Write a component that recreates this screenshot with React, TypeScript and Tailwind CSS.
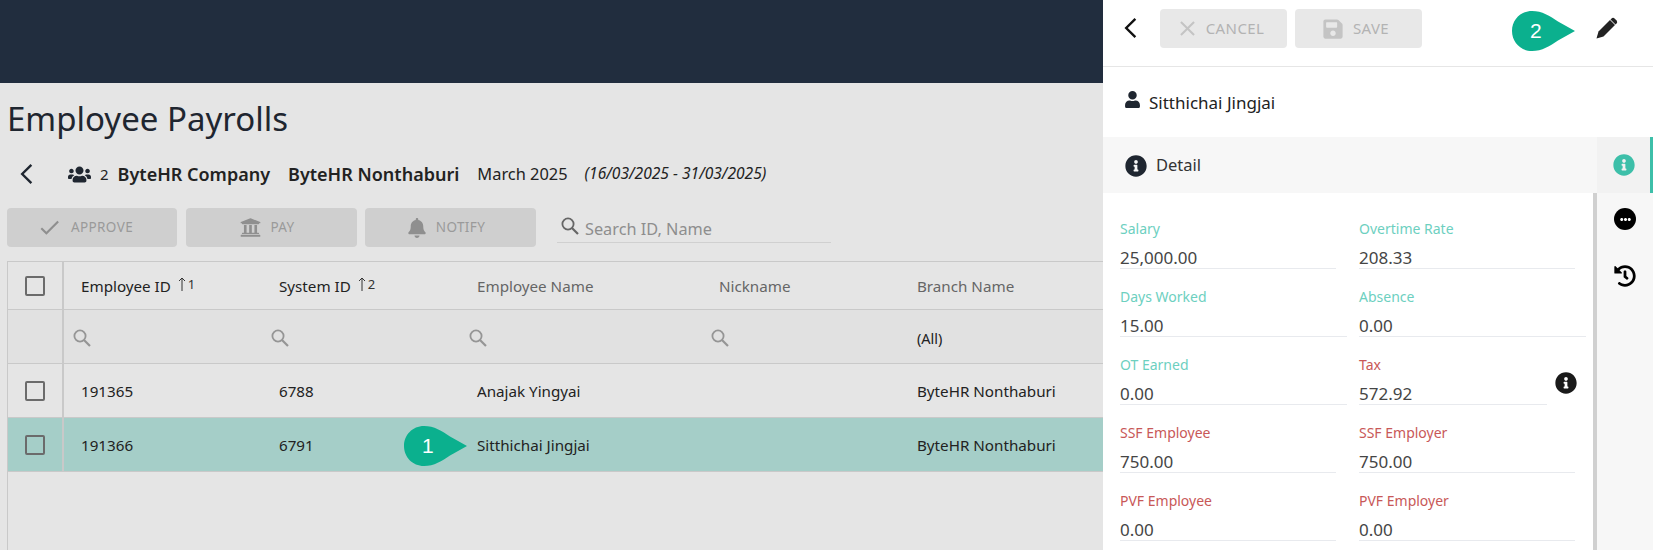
import { FaBell, FaEllipsisH, FaHistory, FaInfoCircle, FaSave, FaUniversity, FaUser, FaUsers } from "react-icons/fa";
import { MdCheck, MdClose } from "react-icons/md";

const columns = ["w-[198px]", "w-[198px]", "w-[242px]", "w-[198px]", "flex-1"];

function Chevron({ className }: { className: string }) {
  return (
    <svg viewBox="0 0 12 20" className={className} fill="none" stroke="currentColor" strokeWidth="2.2">
      <path d="M10.5 1.5 2 10l8.5 8.5" />
    </svg>
  );
}

function SearchGlyph({ className }: { className: string }) {
  return (
    <svg viewBox="0 0 18 18" className={className} fill="none" stroke="currentColor" strokeWidth="1.8">
      <circle cx="7" cy="7" r="5.600" />
      <path d="M11 11l6 6" strokeWidth="2.200" />
    </svg>
  );
}

function Pencil({ className }: { className: string }) {
  return (
    <svg viewBox="0 0 22 22" className={className} fill="currentColor">
      <path d="M.5 21.500 2.500 14.500 14 3l5 5L7.500 19.500Z" />
      <path d="M15.300 1.700a2.500 2.500 0 0 1 3.500 0l1.500 1.500a2.500 2.500 0 0 1 0 3.500l-.8.800-5-5Z" />
    </svg>
  );
}

function Marker({ label, className }: { label: string; className: string }) {
  return (
    <div className={`absolute h-[40px] w-[63px] ${className}`}>
      <svg viewBox="0 0 63 40" className="h-full w-full">
        <path d="M20 0C30 0 38 5 46 10.500L63 20 46 29.500C38 35 30 40 20 40 8.500 40 0 31 0 20S8.500 0 20 0Z" fill="#0bb08e" />
      </svg>
      <span className="absolute left-[18px] top-[7px] font-['Liberation_Sans',sans-serif] text-[21px] leading-[26px] text-white">{label}</span>
    </div>
  );
}

function SortMark({ n }: { n: number }) {
  return (
    <span className="relative top-[-2px] ml-[7px] flex items-start gap-[2px] text-[13px] leading-[16px] text-[#333]">
      <svg viewBox="0 0 8 14" className="mt-[1px] h-[14px] w-[8px]" fill="none" stroke="#333" strokeWidth="1">
        <path d="M4 14V1M1 4l3-3 3 3" />
      </svg>
      {n}
    </span>
  );
}

function Checkbox() {
  return <span className="block h-[20px] w-[20px] rounded-[2px] border-2 border-[#6b6b6b]" />;
}

function ActionButton({ icon, label, width }: { icon: React.ReactNode; label: string; width: string }) {
  return (
    <div className={`flex h-[39px] items-center justify-center gap-[9px] rounded-[4px] bg-[#cfcfcf] text-[13.500px] tracking-[0.4px] text-[#9a9a9a] ${width}`}>
      {icon}
      {label}
    </div>
  );
}

function Row({ id, sys, name, selected }: { id: string; sys: string; name: string; selected?: boolean }) {
  const cells = [id, sys, name, "", "ByteHR Nonthaburi"];
  return (
    <div className={`flex h-[54px] items-center border-b border-[#c9c9c9] ${selected ? "bg-[#a5cec8]" : ""}`}>
      <div className="flex h-full w-[56px] items-center justify-center border-r-2 border-[#c9c9c9]">
        <Checkbox />
      </div>
      {cells.map((c, i) => (
        <div key={i} className={`pl-[17px] pt-[1px] text-[15.200px] text-[#222] ${columns[i]}`}>{c}</div>
      ))}
    </div>
  );
}

function Field({ label, value, tone, line }: { label: string; value: string; tone: "teal" | "red"; line: string }) {
  return (
    <div className="h-[68px]">
      <div className={`text-[14px] leading-[20px] ${tone === "teal" ? "text-[#6dd0bf]" : "text-[#c85858]"}`}>{label}</div>
      <div className={`mt-[3px] h-[27px] border-b border-[#e8eaee] text-[17px] leading-[31px] text-[#454545] ${line}`}>{value}</div>
    </div>
  );
}

export default function App() {
  return (
    <div className="flex h-[550px] w-full overflow-hidden font-['Noto_Sans',sans-serif]">
      <div className="relative w-[1103px] shrink-0 bg-[#e5e5e5]">
        <div className="h-[83px] bg-[#212d3e]" />
        <h1 className="ml-[7px] mt-[12px] text-[33px] leading-[48px] text-[#1f2630]">Employee Payrolls</h1>
        <div className="mt-[17px] flex h-[28px] items-center text-[#222]">
          <Chevron className="ml-[20px] h-[22px] w-[13px] text-[#1f2630]" />
          <FaUsers className="ml-[35px] text-[23px] text-[#1f2630]" />
          <span className="ml-[9px] text-[15px]">2</span>
          <span className="ml-[9px] text-[18px] font-semibold">ByteHR Company</span>
          <span className="ml-[18px] text-[18px] font-semibold">ByteHR Nonthaburi</span>
          <span className="ml-[18px] text-[16.400px]">March 2025</span>
          <span className="ml-[17px] text-[15.600px] italic">(16/03/2025 - 31/03/2025)</span>
        </div>
        <div className="mt-[20px] flex items-start px-[7px]">
          <ActionButton width="w-[170px] pr-[14px]" label="APPROVE" icon={<MdCheck className="text-[25px] text-[#8f8f8f]" />} />
          <ActionButton width="w-[171px] ml-[9px] pr-[8px]" label="PAY" icon={<FaUniversity className="text-[21px] text-[#8f8f8f]" />} />
          <ActionButton width="w-[171px] ml-[8px] pr-[9px]" label="NOTIFY" icon={<FaBell className="text-[20px] text-[#8f8f8f]" />} />
          <div className="ml-[21px] flex h-[35px] w-[274px] items-end gap-[6px] border-b border-[#d0d0d0] pl-[4px] text-[16.300px] leading-[26px] text-[#8e8e8e]">
            <SearchGlyph className="mb-[7px] h-[18px] w-[18px] text-[#666]" />
            Search ID, Name
          </div>
        </div>
        <div className="ml-[7px] mt-[14px] border-l border-t border-[#c9c9c9]">
          <div className="flex h-[48px] items-center border-b border-[#c9c9c9]">
            <div className="flex h-full w-[56px] items-center justify-center border-r-2 border-[#c9c9c9]">
              <Checkbox />
            </div>
            <div className={`flex items-center pl-[17px] pt-[1px] text-[15.200px] text-[#222] ${columns[0]}`}>Employee ID<SortMark n={1} /></div>
            <div className={`flex items-center pl-[17px] pt-[1px] text-[15.200px] text-[#222] ${columns[1]}`}>System ID<SortMark n={2} /></div>
            <div className={`pl-[17px] pt-[1px] text-[15.200px] text-[#666] ${columns[2]}`}>Employee Name</div>
            <div className={`pl-[17px] pt-[1px] text-[15.200px] text-[#666] ${columns[3]}`}>Nickname</div>
            <div className={`pl-[17px] pt-[1px] text-[15.200px] text-[#666] ${columns[4]}`}>Branch Name</div>
          </div>
          <div className="flex h-[54px] items-center border-b border-[#c9c9c9] bg-[#e1e1e1]">
            <div className="h-full w-[56px] border-r-2 border-[#c9c9c9]" />
            {columns.slice(0, 4).map((w, i) => (
              <div key={i} className={`pl-[9px] pt-[3px] ${w}`}>
                <SearchGlyph className="h-[18px] w-[18px] text-[#959595]" />
              </div>
            ))}
            <div className="flex-1 pl-[17px] pt-[4px] text-[14.500px] text-[#222]">(All)</div>
          </div>
          <Row id="191365" sys="6788" name="Anajak Yingyai" />
          <Row id="191366" sys="6791" name="Sitthichai Jingjai" selected />
          <div className="h-[79px]" />
        </div>
        <Marker label="1" className="left-[404px] top-[426px]" />
      </div>

      <div className="relative flex flex-1 flex-col bg-white">
        <div className="flex h-[67px] shrink-0 items-start border-b border-[#e6e6e6] pl-[21px] pt-[9px]">
          <Chevron className="mt-[8px] h-[22px] w-[13px] text-[#111]" />
          <div className="ml-[23px] flex h-[39px] w-[127px] items-center justify-center gap-[6px] rounded-[4px] bg-[#e8e8e8] pr-[8px] text-[15px] tracking-[0.4px] text-[#b3b3b3]">
            <MdClose className="text-[25px] text-[#c4c4c4]" />
            CANCEL
          </div>
          <div className="ml-[8px] flex h-[39px] w-[127px] items-center justify-center gap-[9px] rounded-[4px] bg-[#e8e8e8] pr-[6px] text-[15px] tracking-[0.4px] text-[#b3b3b3]">
            <FaSave className="text-[22px] text-[#c4c4c4]" />
            SAVE
          </div>
        </div>
        <div className="flex min-h-0 flex-1">
          <div className="flex min-w-0 flex-1 flex-col">
            <div className="flex h-[70px] shrink-0 items-center gap-[8px] pl-[21px] pt-[1px] text-[17px] text-[#222]">
              <FaUser className="relative top-[-3px] text-[17px] text-[#1f2630]" />
              Sitthichai Jingjai
            </div>
            <div className="flex h-[56px] shrink-0 items-center gap-[9px] bg-[#f7f7f7] pl-[22px] pt-[1px] text-[16.500px] text-[#333]">
              <FaInfoCircle className="text-[22px] text-[#1f2630]" />
              Detail
            </div>
            <div className="flex-1 border-r-[4px] border-[#d0d0d0] pl-[17px] pt-[26px]">
              <div className="grid grid-cols-[239px_1fr]">
                <Field label="Salary" value="25,000.00" tone="teal" line="w-[216px]" />
                <Field label="Overtime Rate" value="208.33" tone="teal" line="w-[216px]" />
                <Field label="Days Worked" value="15.00" tone="teal" line="w-[227px]" />
                <Field label="Absence" value="0.00" tone="teal" line="w-[227px]" />
                <Field label="OT Earned" value="0.00" tone="teal" line="w-[227px]" />
                <div className="relative">
                  <Field label="Tax" value="572.92" tone="red" line="w-[188px]" />
                  <FaInfoCircle className="absolute left-[196px] top-[17px] text-[22px] text-[#1a1a1a]" />
                </div>
                <Field label="SSF Employee" value="750.00" tone="red" line="w-[216px]" />
                <Field label="SSF Employer" value="750.00" tone="red" line="w-[216px]" />
                <Field label="PVF Employee" value="0.00" tone="red" line="w-[216px]" />
                <Field label="PVF Employer" value="0.00" tone="red" line="w-[216px]" />
              </div>
            </div>
          </div>
          <div className="w-[56px] shrink-0">
            <div className="h-[70px] bg-white" />
            <div className="flex h-[56px] items-center border-r-[3px] border-[#3dbfa9] bg-[#f2f2f2] pl-[16px]">
              <FaInfoCircle className="text-[22px] text-[#3dbfa9]" />
            </div>
            <div className="flex h-[357px] flex-col items-start gap-[35px] bg-[#f7f7f7] pl-[17px] pt-[15px]">
              <span className="flex h-[22px] w-[22px] items-center justify-center rounded-full bg-black">
                <FaEllipsisH className="text-[11px] text-white" />
              </span>
              <FaHistory className="text-[22px] text-black" />
            </div>
          </div>
        </div>
        <Marker label="2" className="left-[409px] top-[11px]" />
        <Pencil className="absolute left-[493px] top-[17px] h-[22px] w-[22px] text-[#222]" />
      </div>
    </div>
  );
}
